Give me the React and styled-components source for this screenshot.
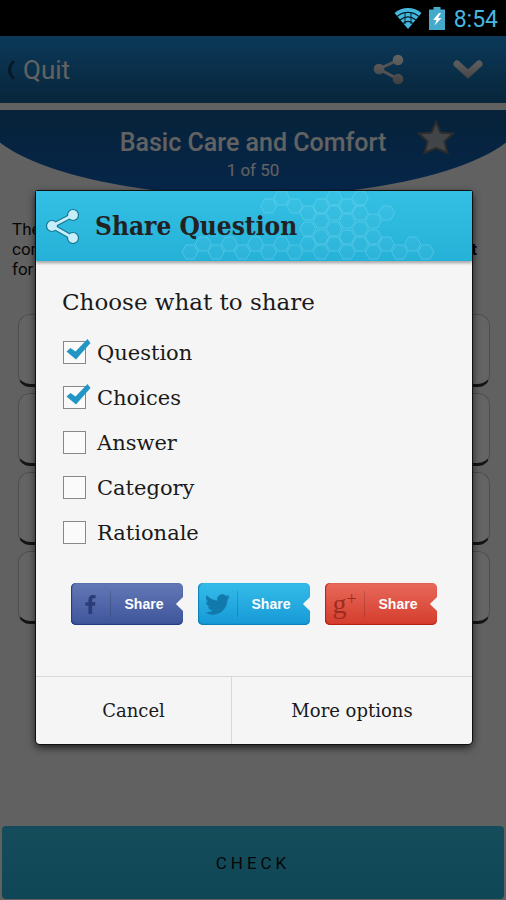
import { useState } from "react";
import styled, { createGlobalStyle } from "styled-components";
import { FaFacebookF, FaTwitter } from "react-icons/fa";

const GlobalStyle = createGlobalStyle`
    * {
        box-sizing: border-box;
    }
    body {
        margin: 0;
        background: #f2f2f2;
        font-family: Roboto, sans-serif;
    }
    button {
        font: inherit;
        border: 0;
        padding: 0;
        background: none;
        cursor: pointer;
    }
`;

const Screen = styled.div`
    position: relative;
    min-height: 100vh;
    display: flex;
    flex-direction: column;
    overflow: hidden;
`;

const StatusBar = styled.div`
    position: relative;
    z-index: 2;
    height: 36px;
    padding-right: 8px;
    display: flex;
    align-items: center;
    justify-content: flex-end;
    gap: 7px;
    background: #000;
    color: #45b8e0;
    font-size: 23px;
    svg {
        display: block;
    }
    time {
        margin-left: 2px;
        padding-top: 2px;
    }
`;

const NavBar = styled.header`
    height: 67px;
    padding: 0 21px 0 6px;
    display: flex;
    align-items: center;
    gap: 46px;
    background: linear-gradient(#1e8fdf, #145e92);
`;

const QuitButton = styled.button`
    margin-right: auto;
    display: flex;
    align-items: center;
    gap: 7px;
    color: #f4f4f4;
    font-size: 26px;
`;

const IconButton = styled.button`
    display: flex;
    svg {
        display: block;
    }
`;

const Banner = styled.section`
    position: relative;
    margin-top: 7px;
    height: 88px;
    padding-top: 17px;
    text-align: center;
    color: #f4f4f4;
    background: linear-gradient(#12558f, #0f62bd);
    clip-path: ellipse(54% 86px at 50% 0);
    h1 {
        margin: 0;
        font-size: 25px;
        line-height: 32px;
        font-weight: 500;
    }
    p {
        margin: 0;
        font-size: 17px;
        line-height: 22px;
    }
`;

const StarButton = styled(IconButton)`
    position: absolute;
    top: 8px;
    right: 50px;
`;

const QuestionText = styled.p`
    margin: 21px 29px 0 12px;
    font-size: 17px;
    line-height: 20px;
    color: #111;
    span {
        display: flex;
        justify-content: space-between;
        white-space: nowrap;
    }
`;

const AnswerList = styled.div`
    margin: 35px 16px 0 18px;
    display: flex;
    flex-direction: column;
    gap: 6px;
`;

const AnswerSlot = styled.div`
    height: 73px;
    border: 1px solid #c4c4c4;
    border-bottom: 3px solid #333;
    border-radius: 12px;
    background: #fafafa;
`;

const CheckButton = styled.button`
    && {
        margin: auto 2px 1px;
        height: 73px;
        border-radius: 4px;
        background: linear-gradient(#34bfe4, #28b0d6);
        color: #111;
        font-size: 17px;
        letter-spacing: 4px;
    }
`;

const Overlay = styled.div`
    position: absolute;
    inset: 0;
    z-index: 1;
    padding: 191px 34px 0 36px;
    background: rgba(0, 0, 0, 0.6);
`;

const Dialog = styled.section`
    font-family: "DejaVu Serif", serif;
    color: #1a1a1a;
    background: #f5f5f5;
    border-radius: 2px 2px 4px 4px;
    box-shadow: 0 0 0 1px #111, 0 3px 8px rgba(0, 0, 0, 0.8);
`;

const DialogHeader = styled.header`
    position: relative;
    height: 70px;
    padding-left: 10px;
    display: flex;
    align-items: center;
    gap: 13px;
    background: linear-gradient(#34c0e4, #26b1d8);
    box-shadow: 0 2px 3px rgba(0, 0, 0, 0.35);
    h2 {
        position: relative;
        margin: 0;
        color: #222;
        font-family: "DejaVu Serif Condensed", "DejaVu Serif", serif;
        font-size: 26px;
        font-weight: bold;
    }
`;

const HexPattern = styled.svg`
    position: absolute;
    top: 0;
    right: 0;
`;

const DialogBody = styled.div`
    padding: 26px 26px 51px;
`;

const Prompt = styled.h3`
    margin: 0 0 12px;
    font-size: 23px;
    line-height: 31px;
    font-weight: normal;
`;

const Option = styled.label`
    position: relative;
    height: 45px;
    padding-left: 1px;
    display: flex;
    align-items: center;
    gap: 11px;
    font-size: 21px;
    input {
        appearance: none;
        width: 23px;
        height: 23px;
        margin: 0;
        border: 1px solid #888;
        background: #fafafa;
    }
    svg {
        position: absolute;
        left: 4px;
        top: 9px;
        pointer-events: none;
    }
`;

const ShareRow = styled.div`
    margin: 28px 8px 0 9px;
    display: flex;
    gap: 15px;
`;

const ShareButton = styled.button`
    && {
        position: relative;
        width: 112px;
        height: 42px;
        display: flex;
        align-items: center;
        border-radius: 5px;
        background: linear-gradient(${(p) => p.$top}, ${(p) => p.$bottom});
        box-shadow: inset 0 -1px 1px ${(p) => p.$edge}, inset 1px 0 1px ${(p) => p.$edge};
        color: #fff;
        font: bold 14px "Liberation Sans", sans-serif;
    }
    &::after {
        content: "";
        position: absolute;
        right: -5px;
        top: 16px;
        width: 10px;
        height: 10px;
        background: #f5f5f5;
        transform: rotate(45deg);
    }
`;

const Brand = styled.span`
    width: 40px;
    height: 26px;
    display: flex;
    align-items: center;
    justify-content: center;
    border-right: 1px solid rgba(0, 0, 0, 0.15);
    color: ${(p) => p.$color};
    font: 28px/20px "Liberation Serif", serif;
    sup {
        font-size: 18px;
        line-height: 16px;
        align-self: flex-start;
    }
`;

const ShareLabel = styled.span`
    flex: 1;
    padding-right: 6px;
    text-align: center;
`;

const DialogFooter = styled.footer`
    display: flex;
    height: 68px;
    border-top: 1px solid #d8d8d8;
    font-size: 18px;
    button {
        flex: 240;
        color: #1a1a1a;
    }
    button:first-child {
        flex: 195;
        border-right: 1px solid #d8d8d8;
    }
`;

const WifiIcon = () => (
    <svg width="28" height="22" viewBox="0 0 28 22">
        <path d="M0.500 6C8-.8 20-.8 27.500 6L14 22Z" fill="#45b8e0" />
        <g fill="none" stroke="#071e28" strokeWidth="1.200">
            <path d="M3 9.500C9.500 4 18.500 4 25 9.500" />
            <path d="M6 13C11 9 17 9 22 13" />
            <path d="M9 16.500C12 14 16 14 19 16.500" />
            <path d="M11 6v11M17 6v11" strokeWidth="1" />
        </g>
    </svg>
);

const BatteryIcon = () => (
    <svg width="16" height="23" viewBox="0 0 16 23">
        <path d="M4.500 0h7v2.500H16V23H0V2.500h4.500Z" fill="#45a9cc" />
        <path d="M10 6 4 13h3.500L5.500 18.500 12.500 11H9L12 6Z" fill="#fff" />
    </svg>
);

const BackIcon = () => (
    <svg width="10" height="22" viewBox="0 0 10 22">
        <path d="M8 2Q-1 11 8 20" fill="none" stroke="#123e60" strokeWidth="3" />
    </svg>
);

const NavShareIcon = () => (
    <svg width="32" height="32" viewBox="0 0 32 32">
        <defs>
            <linearGradient id="metal" gradientUnits="userSpaceOnUse" x1="0" y1="0" x2="0" y2="32">
                <stop stopColor="#fff" />
                <stop offset="1" stopColor="#9a9a9a" />
            </linearGradient>
        </defs>
        <path d="M25 6 6 15l19 10" fill="none" stroke="#d0d0d0" strokeWidth="3" />
        <g fill="url(#metal)">
            <circle cx="25" cy="6" r="5.300" />
            <circle cx="6" cy="15" r="5.300" />
            <circle cx="25" cy="25" r="5.300" />
        </g>
    </svg>
);

const ChevronIcon = () => (
    <svg width="34" height="22" viewBox="0 0 34 22">
        <defs>
            <linearGradient id="steel" gradientUnits="userSpaceOnUse" x1="0" y1="2" x2="0" y2="22">
                <stop stopColor="#eee" />
                <stop offset="1" stopColor="#a5a5a5" />
            </linearGradient>
        </defs>
        <path d="M6 5 17 15 28 5" fill="none" stroke="url(#steel)" strokeWidth="7" strokeLinecap="round" strokeLinejoin="miter" />
    </svg>
);

const StarIcon = () => (
    <svg width="40" height="38" viewBox="0 0 40 38">
        <path
            d="M20 4 24.500 14.500 37 15.500 28.500 23.500 31.500 35 20 30 8.500 35 11.500 23.500 3 15.500 15.500 14.500Z"
            fill="#a3adb5"
            stroke="#6c6c6c"
            strokeWidth="2"
        />
    </svg>
);

const DialogShareIcon = () => (
    <svg width="36" height="36" viewBox="0 0 36 36">
        <path d="M27 7 6 18l21 12" fill="none" stroke="#16748f" strokeWidth="5" />
        <g fill="#c5effb" stroke="#16748f" strokeWidth="1.200">
            <circle cx="27" cy="7" r="5.500" />
            <circle cx="6" cy="18" r="5.500" />
            <circle cx="27" cy="30" r="5.500" />
        </g>
        <path d="M27 7 6 18l21 12" fill="none" stroke="#c5effb" strokeWidth="3" />
    </svg>
);

const TickIcon = () => (
    <svg width="26" height="24" viewBox="0 0 26 24">
        <path d="M.5 12.500 4.500 9 9.500 12.500 21.500 0 24.500 4 10 20.500Z" fill="#2196c4" />
    </svg>
);

// rows of cell centres, one list per column
const hexColumns = [
    [61], [53], [61], [53], [61], [53], [15, 61], [7, 53], [15, 61], [22, 38, 53],
    [15, 30, 46, 61], [7, 22, 38, 53], [15, 30, 46, 61], [7, 22, 38, 53],
    [30, 46, 61], [22, 53], [61], [53], [61],
];

const hexPoints = (cx, cy) =>
    [[-8, 0], [-4, -7], [4, -7], [8, 0], [4, 7], [-4, 7]]
        .map(([x, y]) => `${cx + x},${cy + y}`)
        .join(" ");

const Hexagons = () => (
    <HexPattern width="300" height="70" viewBox="0 0 300 70">
        <g fill="#fff" fillOpacity=".03" stroke="#8ee2f6" strokeOpacity=".35">
            {hexColumns.map((column, i) =>
                column.map((y) => <polygon key={`${i}-${y}`} points={hexPoints(18 + i * 13.1, y)} />)
            )}
        </g>
    </HexPattern>
);

const options = ["Question", "Choices", "Answer", "Category", "Rationale"];

const App = () => {
    const [selected, setSelected] = useState(["Question", "Choices"]);

    const toggle = (name) => {
        setSelected(
            selected.includes(name) ? selected.filter((item) => item !== name) : [...selected, name]
        );
    };

    return (
        <Screen>
            <GlobalStyle />
            <StatusBar>
                <WifiIcon />
                <BatteryIcon />
                <time>8:54</time>
            </StatusBar>
            <NavBar>
                <QuitButton><BackIcon />Quit</QuitButton>
                <IconButton aria-label="Share"><NavShareIcon /></IconButton>
                <IconButton aria-label="Expand"><ChevronIcon /></IconButton>
            </NavBar>
            <Banner>
                <h1>Basic Care and Comfort</h1>
                <p>1 of 50</p>
                <StarButton aria-label="Favorite"><StarIcon /></StarButton>
            </Banner>
            <QuestionText>
                <span>The nurse</span>
                <span>con<b>t</b></span>
                <span>for</span>
            </QuestionText>
            <AnswerList>
                <AnswerSlot />
                <AnswerSlot />
                <AnswerSlot />
                <AnswerSlot />
            </AnswerList>
            <CheckButton>CHECK</CheckButton>
            <Overlay>
                <Dialog role="dialog" aria-labelledby="share-title">
                    <DialogHeader>
                        <Hexagons />
                        <DialogShareIcon />
                        <h2 id="share-title">Share Question</h2>
                    </DialogHeader>
                    <DialogBody>
                        <Prompt>Choose what to share</Prompt>
                        {options.map((name) => (
                            <Option key={name}>
                                <input
                                    type="checkbox"
                                    checked={selected.includes(name)}
                                    onChange={() => toggle(name)}
                                />
                                {selected.includes(name) && <TickIcon />}
                                {name}
                            </Option>
                        ))}
                        <ShareRow>
                            <ShareButton $top="#6378b5" $bottom="#3e559b" $edge="#243a80">
                                <Brand $color="#2b3c78"><FaFacebookF size={19} /></Brand>
                                <ShareLabel>Share</ShareLabel>
                            </ShareButton>
                            <ShareButton $top="#35bce9" $bottom="#1699d6" $edge="#0d7fb8">
                                <Brand $color="#1279ad"><FaTwitter size={25} /></Brand>
                                <ShareLabel>Share</ShareLabel>
                            </ShareButton>
                            <ShareButton $top="#e8695a" $bottom="#d43c2c" $edge="#b32317">
                                <Brand $color="#9c2c20">g<sup>+</sup></Brand>
                                <ShareLabel>Share</ShareLabel>
                            </ShareButton>
                        </ShareRow>
                    </DialogBody>
                    <DialogFooter>
                        <button>Cancel</button>
                        <button>More options</button>
                    </DialogFooter>
                </Dialog>
            </Overlay>
        </Screen>
    );
};

export default App;
